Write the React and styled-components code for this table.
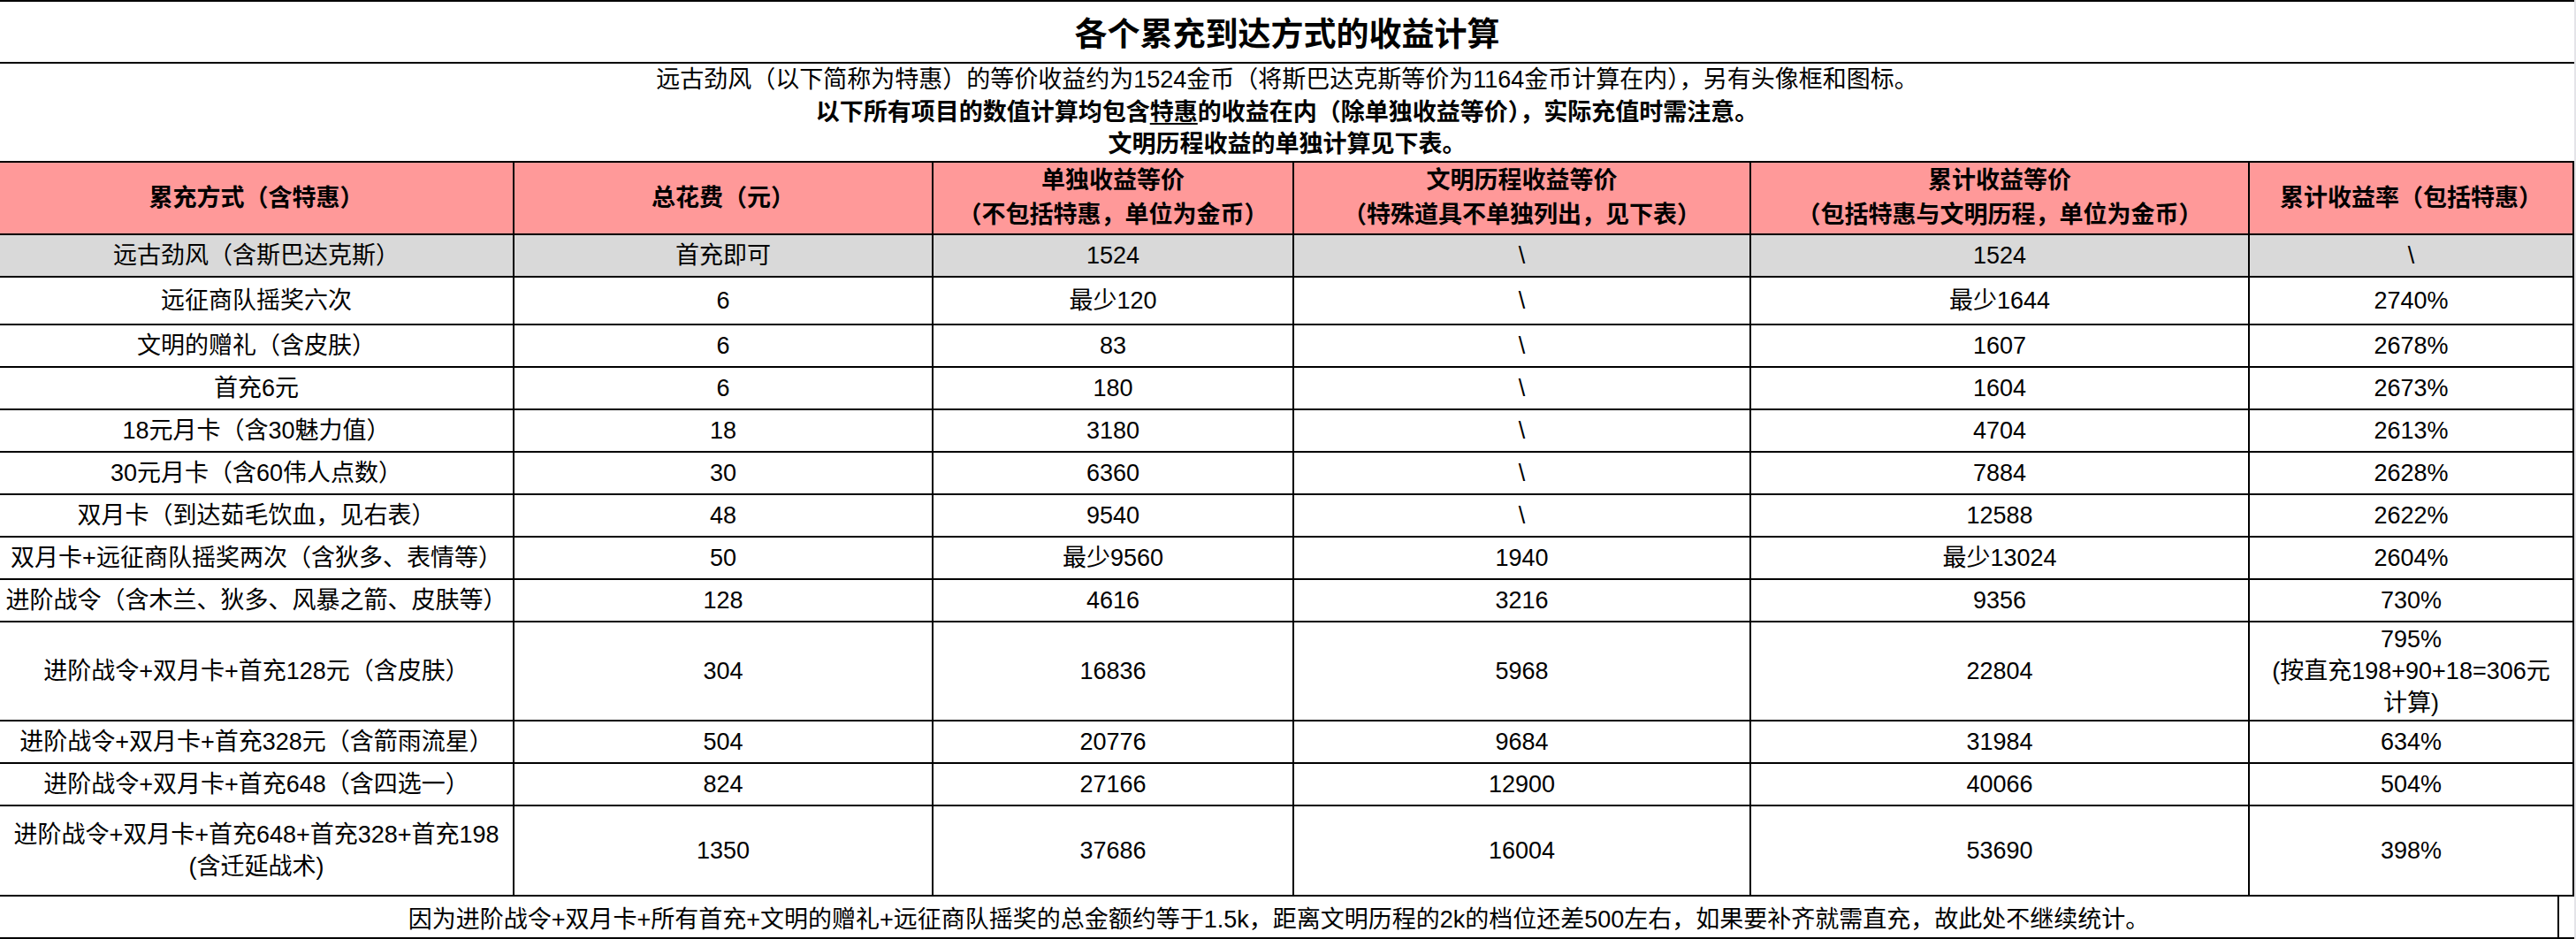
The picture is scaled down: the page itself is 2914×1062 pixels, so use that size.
import React from "react";
import styled, { createGlobalStyle } from "styled-components";

const COLS = "582px 474px 408px 517px 564px 367px";

const headers = [
  ["累充方式（含特惠）"],
  ["总花费（元）"],
  ["单独收益等价", "（不包括特惠，单位为金币）"],
  ["文明历程收益等价", "（特殊道具不单独列出，见下表）"],
  ["累计收益等价", "（包括特惠与文明历程，单位为金币）"],
  ["累计收益率（包括特惠）"],
];

// [height, cells...] — a cell may be an array of lines
const rows = [
  { h: 48, shade: true, cells: ["远古劲风（含斯巴达克斯）", "首充即可", "1524", "\\", "1524", "\\"] },
  { h: 54, cells: ["远征商队摇奖六次", "6", "最少120", "\\", "最少1644", "2740%"] },
  { h: 48, cells: ["文明的赠礼（含皮肤）", "6", "83", "\\", "1607", "2678%"] },
  { h: 48, cells: ["首充6元", "6", "180", "\\", "1604", "2673%"] },
  { h: 48, cells: ["18元月卡（含30魅力值）", "18", "3180", "\\", "4704", "2613%"] },
  { h: 48, cells: ["30元月卡（含60伟人点数）", "30", "6360", "\\", "7884", "2628%"] },
  { h: 48, cells: ["双月卡（到达茹毛饮血，见右表）", "48", "9540", "\\", "12588", "2622%"] },
  { h: 48, cells: ["双月卡+远征商队摇奖两次（含狄多、表情等）", "50", "最少9560", "1940", "最少13024", "2604%"] },
  { h: 48, cells: ["进阶战令（含木兰、狄多、风暴之箭、皮肤等）", "128", "4616", "3216", "9356", "730%"] },
  {
    h: 112,
    cells: [
      "进阶战令+双月卡+首充128元（含皮肤）",
      "304",
      "16836",
      "5968",
      "22804",
      ["795%", "(按直充198+90+18=306元", "计算)"],
    ],
  },
  { h: 48, cells: ["进阶战令+双月卡+首充328元（含箭雨流星）", "504", "20776", "9684", "31984", "634%"] },
  { h: 48, cells: ["进阶战令+双月卡+首充648（含四选一）", "824", "27166", "12900", "40066", "504%"] },
  {
    h: 102,
    cells: [["进阶战令+双月卡+首充648+首充328+首充198", "(含迁延战术)"], "1350", "37686", "16004", "53690", "398%"],
  },
];

function Lines({ value }) {
  const lines = Array.isArray(value) ? value : [value];
  return lines.map((line, i) => (
    <React.Fragment key={i}>
      {i > 0 && <br />}
      {line}
    </React.Fragment>
  ));
}

export default function App() {
  return (
    <>
      <GlobalStyle />
      <Sheet>
        <TitleBar>各个累充到达方式的收益计算</TitleBar>

        <Notes>
          <NoteLine>
            远古劲风（以下简称为特惠）的等价收益约为1524金币（将斯巴达克斯等价为1164金币计算在内），另有头像框和图标。
          </NoteLine>
          <NoteLine $bold>
            以下所有项目的数值计算均包含<u>特惠</u>的收益在内（除单独收益等价），实际充值时需注意。
          </NoteLine>
          <NoteLine $bold>文明历程收益的单独计算见下表。</NoteLine>
        </Notes>

        <Row $h={82} $bg="#ff9999">
          {headers.map((lines, i) => (
            <HeadCell key={i}>
              <Lines value={lines} />
            </HeadCell>
          ))}
        </Row>

        {rows.map((row, r) => (
          <Row key={r} $h={row.h} $bg={row.shade ? "#d9d9d9" : "#ffffff"}>
            {row.cells.map((c, i) => (
              <Cell key={i}>
                <span>
                  <Lines value={c} />
                </span>
              </Cell>
            ))}
          </Row>
        ))}

        <FooterRow>
          <FooterText>
            因为进阶战令+双月卡+所有首充+文明的赠礼+远征商队摇奖的总金额约等于1.5k，距离文明历程的2k的档位还差500左右，如果要补齐就需直充，故此处不继续统计。
          </FooterText>
        </FooterRow>
      </Sheet>
    </>
  );
}

/* ---------- styles ---------- */

const GlobalStyle = createGlobalStyle`
  html, body {
    margin: 0;
    padding: 0;
    background: #e4e4e8;
  }
  * {
    box-sizing: border-box;
  }
`;

const Sheet = styled.div`
  width: 2912px;
  background: #ffffff;
  color: #000;
  font-family: "Liberation Sans", "Noto Sans CJK SC", sans-serif;
  font-size: 27px;
`;

const TitleBar = styled.div`
  height: 72px;
  border-top: 2px solid #000;
  border-bottom: 2px solid #000;
  display: flex;
  align-items: center;
  justify-content: center;
  font-size: 37px;
  font-weight: 700;
`;

const Notes = styled.div`
  height: 112px;
  border-bottom: 2px solid #000;
  display: flex;
  flex-direction: column;
  justify-content: center;
  align-items: center;
`;

const NoteLine = styled.div`
  line-height: 36.6px;
  font-weight: ${({ $bold }) => ($bold ? 700 : 400)};
  white-space: nowrap;

  u {
    text-decoration-thickness: 2px;
    text-underline-offset: 3px;
  }
`;

const Row = styled.div`
  display: grid;
  grid-template-columns: ${COLS};
  height: ${({ $h }) => $h}px;
  background: ${({ $bg }) => $bg};
`;

const Cell = styled.div`
  border-right: 2px solid #000;
  border-bottom: 2px solid #000;
  display: flex;
  align-items: center;
  justify-content: center;
  text-align: center;
  line-height: 36px;
  white-space: nowrap;
  overflow: hidden;
`;

const HeadCell = styled(Cell)`
  font-weight: 700;
  line-height: 39px;
`;

const FooterRow = styled.div`
  height: 48px;
  border-bottom: 2px solid #000;
`;

const FooterText = styled.div`
  width: 2895px;
  height: 100%;
  border-right: 2px solid #000;
  display: flex;
  align-items: center;
  justify-content: center;
  white-space: nowrap;
`;
